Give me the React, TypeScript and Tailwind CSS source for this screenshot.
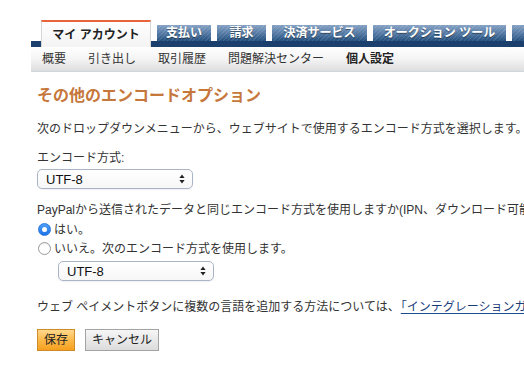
import React from "react";

const font = "font-['Liberation_Sans','Noto_Sans_CJK_JP',sans-serif]";

function Tab({ label, w }: { label: string; w: string }) {
  return (
    <div
      className={`${w} mt-[5px] h-[16px] shrink-0 flex items-center justify-center text-[12px] font-bold leading-none text-white whitespace-nowrap [text-shadow:0_1px_1px_rgba(0,0,0,0.45)] bg-[repeating-linear-gradient(135deg,rgba(255,255,255,0.10)_0_1px,transparent_1px_3px),linear-gradient(to_bottom,#86a2c4,#5a7ea8_45%,#24507f)]`}
    >
      {label}
    </div>
  );
}

function Select({ className }: { className?: string }) {
  return (
    <div
      className={`${className ?? ""} h-[20px] w-[156px] rounded-[5px] border border-[#a9b4c6] bg-gradient-to-b from-white to-[#f7f7f7] flex items-center justify-between pl-[8px] pr-[7px] shadow-[0_1px_1px_rgba(0,0,0,0.06)]`}
    >
      <span className="text-[13px] leading-none text-[#111]">UTF-8</span>
      <svg width="6" height="10" viewBox="0 0 6 10">
        <path d="M3 0.5 L5.6 4 L0.4 4 Z" fill="#222" />
        <path d="M3 9.5 L5.6 6 L0.4 6 Z" fill="#222" />
      </svg>
    </div>
  );
}

export default function App() {
  return (
    <div className={`${font} w-[524px] h-[366px] overflow-hidden bg-white text-[#333]`}>
      {/* nav */}
      <div className="pl-[31px] pt-[20px]">
        <div className="h-[27px] w-[700px] pl-[10px] flex gap-[6px] bg-[linear-gradient(to_bottom,transparent_21px,#1c406e_21px)]">
          <div className="w-[110px] h-[27px] shrink-0 border-t-2 border-t-[#e8643a] border-x border-x-[#d6d6d6] bg-gradient-to-b from-white to-[#f3f3f3] flex items-center justify-center text-[12px] font-bold leading-none text-[#222] whitespace-nowrap">
            マイ アカウント
          </div>
          <Tab label="支払い" w="w-[54px]" />
          <Tab label="請求" w="w-[49px]" />
          <Tab label="決済サービス" w="w-[95px]" />
          <Tab label="オークション ツール" w="w-[133px]" />
          <Tab label="製品とサービス" w="w-[110px]" />
        </div>
        <div className="h-[25px] w-[700px] flex items-center border-b border-b-[#cfd6e0] bg-gradient-to-b from-white via-[#f4f4f4] to-[#dedede] text-[12px] leading-none text-[#333] whitespace-nowrap">
          <span className="px-[11px]">概要</span>
          <span className="px-[11px]">引き出し</span>
          <span className="px-[11px]">取引履歴</span>
          <span className="px-[11px]">問題解決センター</span>
          <span className="px-[11px] font-bold text-[#222]">個人設定</span>
        </div>
      </div>

      {/* content */}
      <div className="pl-[37px] flex flex-col whitespace-nowrap">
        <h1 className="mt-[14px] text-[16px] leading-[20px] font-bold text-[#c6773b]">
          その他のエンコードオプション
        </h1>
        <p className="mt-[15px] text-[12px] leading-[16px]">
          次のドロップダウンメニューから、ウェブサイトで使用するエンコード方式を選択します。
        </p>
        <p className="mt-[13px] text-[12px] leading-[16px]">エンコード方式:</p>
        <Select className="mt-[3px]" />
        <p className="mt-[13px] text-[12px] leading-[16px]">
          PayPalから送信されたデータと同じエンコード方式を使用しますか(IPN、ダウンロード可能な履歴ログ、メール通知)?
        </p>
        <div className="mt-[2px] h-[19px] flex items-center text-[12px] leading-none">
          <span className="ml-[1px] w-[13px] h-[13px] rounded-full bg-gradient-to-b from-[#4c9ef7] to-[#1d72e6] border border-[#2a78dc] flex items-center justify-center">
            <span className="w-[5px] h-[5px] rounded-full bg-white" />
          </span>
          <span className="ml-[3px]">はい。</span>
        </div>
        <div className="h-[19px] flex items-center text-[12px] leading-none">
          <span className="ml-[1px] w-[13px] h-[13px] rounded-full bg-white border border-[#9a9a9a] shadow-[inset_0_1px_1px_rgba(0,0,0,0.08)]" />
          <span className="ml-[3px]">いいえ。次のエンコード方式を使用します。</span>
        </div>
        <Select className="mt-[3px] ml-[21px]" />
        <p className="mt-[18px] text-[12px] leading-[16px]">
          ウェブ ペイメントボタンに複数の言語を追加する方法については、
          <a className="ml-[1px] text-[#1a3d7a] underline underline-offset-2 decoration-[#1a4c8a]">
            「インテグレーションガイド」
          </a>
          をご覧ください。
        </p>
        <div className="mt-[14px] flex gap-[10px]">
          <button className="h-[22px] px-[6px] border border-[#cf8a2c] bg-gradient-to-b from-[#ffd88a] via-[#fcb948] to-[#f5a01a] text-[12px] leading-none text-[#222]">
            保存
          </button>
          <button className="h-[22px] px-[6px] border border-[#a3a3a3] bg-gradient-to-b from-[#f6f6f6] to-[#dcdcdc] text-[12px] leading-none text-[#222]">
            キャンセル
          </button>
        </div>
      </div>
    </div>
  );
}
